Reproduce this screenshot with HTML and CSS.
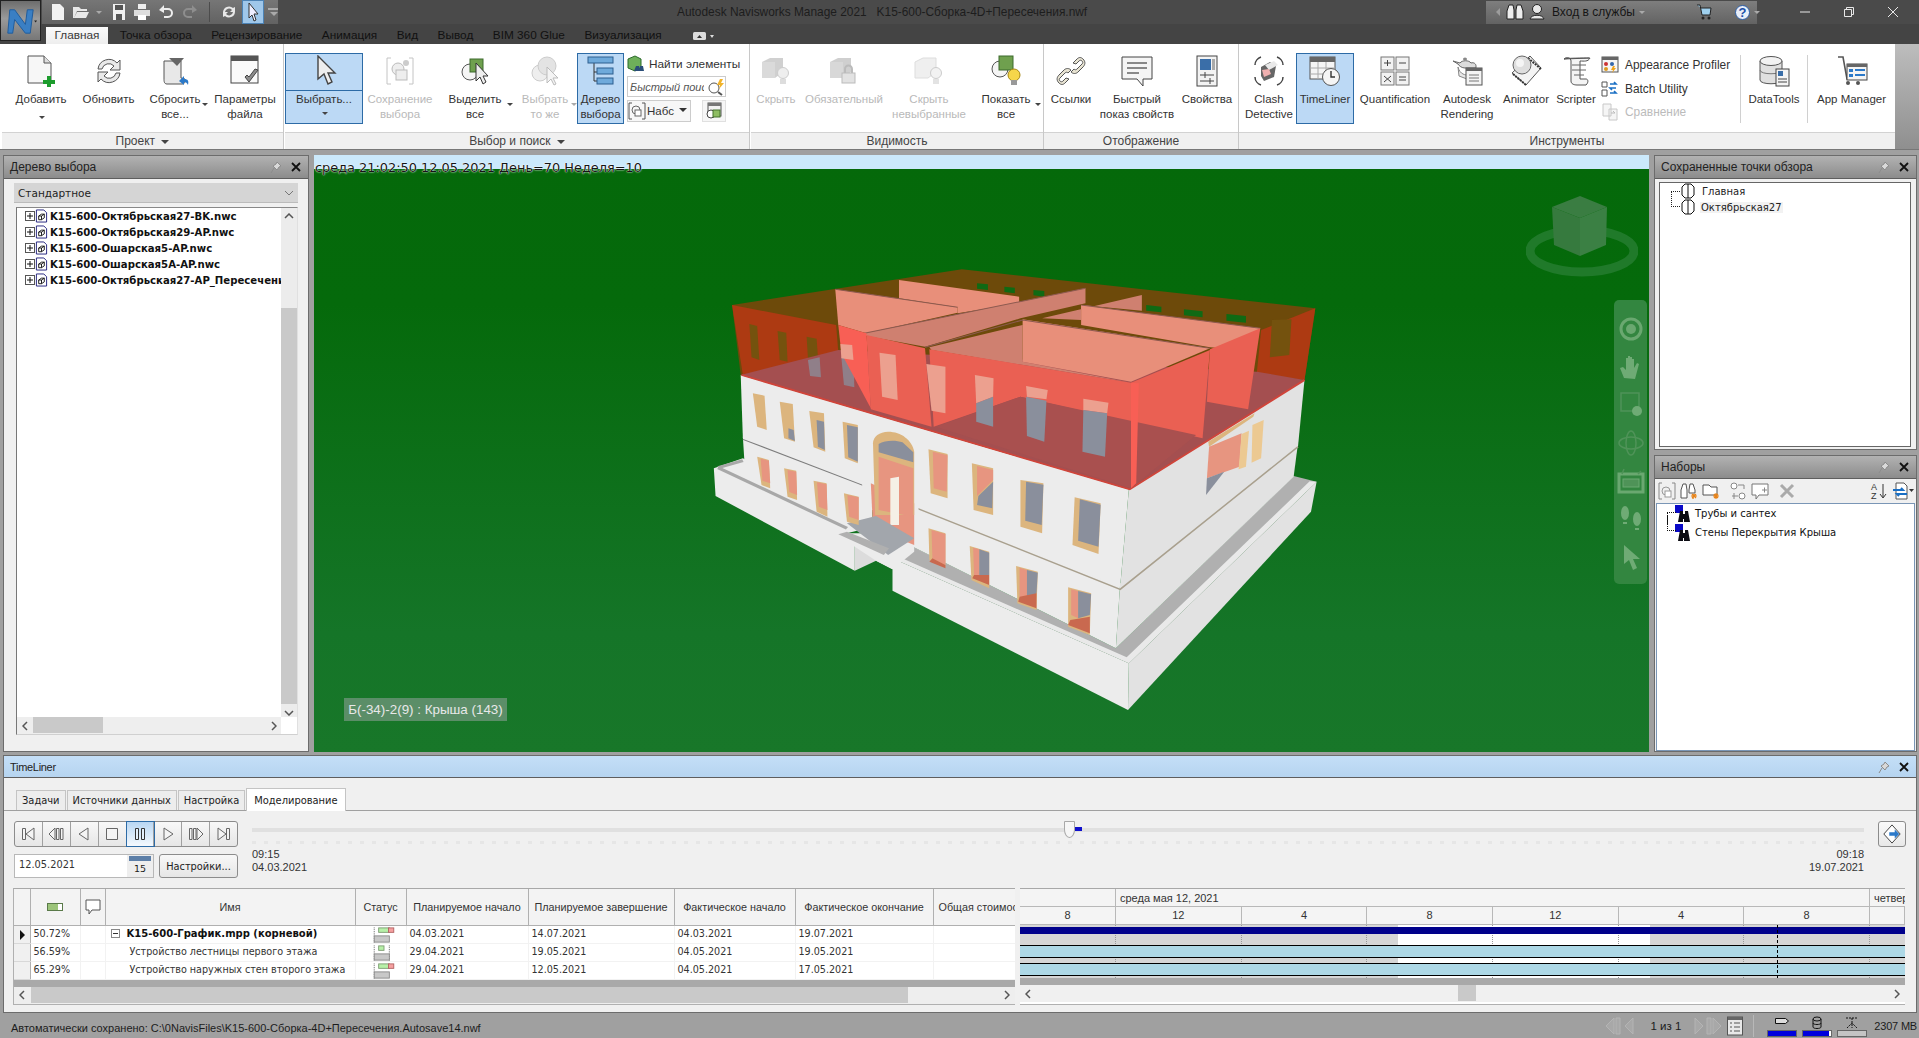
FILE: index.html
```html
<!DOCTYPE html>
<html lang="ru">
<head>
<meta charset="utf-8">
<title>Navisworks Manage 2021</title>
<link rel="stylesheet" href="styles.css">
</head>
<body>
<svg class="defs" width="0" height="0">
  <defs>
    <symbol id="pin" viewBox="0 0 14 14"><path d="M8 2l4 4-2 1-2 3-4-4 3-2zM5 8l-3 5" fill="#d9d9d9" stroke="#8c8c8c"/></symbol>
    <symbol id="x" viewBox="0 0 12 12"><path d="M2 2l8 8M10 2l-8 8" stroke="#111" stroke-width="1.800"/></symbol>
    <symbol id="nwc" viewBox="0 0 14 14"><path d="M1.500 .5h8l3 3v10h-11z" fill="#fff" stroke="#1d1d7a"/><path d="M4 7l3-2h3v4l-3 2H4zM4 7h3v4M7 7l3-2" fill="none" stroke="#111"/></symbol>
    <symbol id="plus" viewBox="0 0 10 10"><rect x=".5" y=".5" width="9" height="9" fill="#fff" stroke="#555"/><path d="M2 5h6M5 2v6" stroke="#111"/></symbol>
    <symbol id="view" viewBox="0 0 16 16"><path d="M5 1h6l3 3v8l-3 3H5l-3-3V4zM8 1v14" fill="#fff" stroke="#111"/></symbol>
    <symbol id="binset" viewBox="0 0 16 18"><rect x="0" y="0" width="8" height="8" fill="#0a0ac8"/><path d="M5 6h3v3h2V6h3l2 11H9v-3H8v3H3z" fill="#0b0b12"/></symbol>
    <symbol id="bar" viewBox="0 0 24 18"><path d="M1 .5v17" stroke="#555" stroke-dasharray="1 1"/><rect x="6" y="1" width="12" height="5" fill="#b7f0a8" stroke="#7a9a70"/><rect x="17" y="1" width="6" height="5" fill="#f5a0a0" stroke="#b06060"/><rect x="1" y="10" width="17" height="7" fill="#c8c8c8" stroke="#888"/></symbol>
    <symbol id="bar2" viewBox="0 0 24 18"><path d="M1 .5v17M18 .5v17" stroke="#555" stroke-dasharray="1 1"/><rect x="6" y="1" width="6" height="5" fill="#b7f0a8" stroke="#7a9a70"/><rect x="1" y="10" width="17" height="7" fill="#c8c8c8" stroke="#888"/></symbol>
  </defs>
</svg>

<header class="chrome">
  <div class="appbtn"><svg viewBox="0 0 40 40" width="40" height="40"><path d="M7 33l2-24h5l11 15 2-15h6l-3 24h-5L14 19l-2 14z" fill="#3a7fc4" stroke="#1f5c9c"/><path d="M34 20l3 0-1.500 2z" fill="#222"/></svg></div>
  <div class="chrome-main">
    <div class="titlebar">
      <div class="qat">
        <svg viewBox="0 0 16 18" width="16" height="18"><path d="M2 1h8l4 4v12H2z" fill="#f2f2f2"/></svg>
        <svg viewBox="0 0 18 18" width="18" height="18"><path d="M1 4h6l2 2h6v2H5L2 15H1zM5 9h12l-3 6H2z" fill="#e8e8e8"/></svg>
        <span class="qat-caret"></span>
        <svg viewBox="0 0 16 18" width="16" height="18"><path d="M2 1h12v16H2z" fill="#efefef"/><rect x="4" y="2" width="8" height="5" fill="#555"/><rect x="5" y="11" width="6" height="6" fill="#555"/></svg>
        <svg viewBox="0 0 18 18" width="18" height="18"><rect x="5" y="1" width="8" height="5" fill="#eee"/><rect x="1" y="7" width="16" height="6" fill="#ddd"/><rect x="5" y="12" width="8" height="5" fill="#fff"/></svg>
        <svg viewBox="0 0 18 18" width="18" height="18"><path d="M2 7l5-5v3h4a5 5 0 0 1 0 10H7v-2h4a3 3 0 0 0 0-6H7v3z" fill="#eee"/></svg>
        <svg viewBox="0 0 18 18" width="18" height="18"><path d="M16 7l-5-5v3H7a5 5 0 0 0 0 10h4v-2H7a3 3 0 0 1 0-6h4v3z" fill="#8e8e8e"/></svg>
        <span class="qat-sep"></span>
        <svg viewBox="0 0 18 18" width="18" height="18"><path d="M3 9a6 6 0 0 1 10-4l2-1v5h-5l2-2a4 4 0 0 0-7 2zM15 9a6 6 0 0 1-10 4l-2 1V9h5l-2 2a4 4 0 0 0 7-2z" fill="#e8e8e8"/></svg>
        <span class="qat-on"><svg viewBox="0 0 14 20" width="14" height="20"><path d="M3 1v15l3-3 2 6 2-1-2-6h4z" fill="#eef" stroke="#333"/></svg></span>
        <span class="qat-more"></span>
      </div>
      <div class="title">Autodesk Navisworks Manage 2021&nbsp;&nbsp;&nbsp;K15-600-Сборка-4D+Пересечения.nwf</div>
      <div class="infocenter">
        <span class="ic-back"></span>
        <svg viewBox="0 0 18 18" width="18" height="18"><path d="M3 2h4l1 5v9H1V8zM11 2h4l2 6v8h-7V7z" fill="#eee" stroke="#222"/></svg>
        <svg viewBox="0 0 18 18" width="18" height="18"><circle cx="9" cy="6" r="4.500" fill="#e8e8e8" stroke="#222"/><path d="M2 16c1-5 13-5 14 0z" fill="#e8e8e8" stroke="#222"/></svg>
        <span class="ic-login">Вход в службы</span><span class="ic-caret"></span>
        <svg class="ic-cart" viewBox="0 0 18 18" width="18" height="18"><path d="M2 2h3l2 10h8l1-7H6" fill="#9fd0ee" stroke="#222"/><circle cx="8" cy="15" r="1.500" fill="#222"/><circle cx="14" cy="15" r="1.500" fill="#222"/></svg>
        <span class="ic-help">?</span><span class="ic-caret"></span>
      </div>
      <div class="winbtns">
        <svg viewBox="0 0 14 14" width="14" height="14"><path d="M2 7h10" stroke="#e8e8e8"/></svg>
        <svg viewBox="0 0 14 14" width="14" height="14"><path d="M2.500 4.500h7v7h-7zM4.500 4.500v-2h7v7h-2" fill="none" stroke="#e8e8e8"/></svg>
        <svg viewBox="0 0 14 14" width="14" height="14"><path d="M2 2l10 10M12 2L2 12" stroke="#e8e8e8"/></svg>
      </div>
    </div>
    <nav class="tabs">
      <span class="tab tab-on">Главная</span>
      <span class="tab">Точка обзора</span>
      <span class="tab">Рецензирование</span>
      <span class="tab">Анимация</span>
      <span class="tab">Вид</span>
      <span class="tab">Вывод</span>
      <span class="tab">BIM 360 Glue</span>
      <span class="tab">Визуализация</span>
      <span class="tab tab-ico"><svg viewBox="0 0 24 10" width="24" height="10"><rect x="1" y="1" width="13" height="8" rx="1.500" fill="#ddd"/><path d="M5 7l2.500-3L10 7z" fill="#333"/><path d="M18 4h4l-2 3z" fill="#ddd"/></svg></span>
    </nav>
  </div>
</header>

<section class="ribbon">
  <div class="rg rg1">
    <div class="rbody cols-project">
      <div class="rb"><svg class="ri" viewBox="0 0 32 32"><path d="M3 1h16l7 7v20H3z" fill="#f7f7f7" stroke="#555"/><path d="M19 1v7h7" fill="#ddd" stroke="#555"/><path d="M22 21h4v4h4v4h-4v3h-4v-3h-4v-4h4z" fill="#1c9c2d"/></svg><span class="rl">Добавить</span><i class="car"></i></div>
      <div class="rb"><svg class="ri" viewBox="0 0 32 32"><path d="M5 14a11 11 0 0 1 19-6l3-3v10H17l4-4a7 7 0 0 0-12 3zM27 18a11 11 0 0 1-19 6l-3 3V17h10l-4 4a7 7 0 0 0 12-3z" fill="#e9e9e9" stroke="#555"/></svg><span class="rl">Обновить</span></div>
      <div class="rb"><svg class="ri" viewBox="0 0 32 32"><path d="M5 6h17v17l4 1c0 3 0 5-3 5H8c-3 0-3-3-3-5z" fill="#e8e8e8" stroke="#555"/><path d="M10 3h15l-7 8z" fill="#666"/><path d="M20 26l5-5v3c4 0 5 2 4 6-1-2-2-3-4-3v3z" fill="#2b79c9"/></svg><span class="rl">Сбросить<br>все...</span><i class="car car-side"></i></div>
      <div class="rb"><svg class="ri" viewBox="0 0 32 32"><rect x="2" y="1" width="27" height="27" fill="#fafafa" stroke="#444"/><rect x="2" y="1" width="27" height="5" fill="#555"/><path d="M16 22l4 5 9-12-3-1-6 8-2-2z" fill="#8c8c8c" stroke="#444"/></svg><span class="rl">Параметры<br>файла</span></div>
    </div>
    <div class="rtitle">Проект <i class="car-in"></i></div>
  </div>
  <div class="rg rg2">
    <div class="rbody cols-select">
      <div class="rb rb-on rb-split"><svg class="ri ri-c" viewBox="0 0 32 32"><path d="M10 1v23l6-5 4 10 4-2-4-9h7z" fill="#eee" stroke="#444" stroke-width="1.400"/></svg><span class="split-line"></span><span class="rl rl-split">Выбрать...</span><i class="car"></i></div>
      <div class="rb rb-off"><svg class="ri" viewBox="0 0 32 32"><path d="M7 3H3v26h4M25 3h4v26h-4" fill="none" stroke="#c4c4c4"/><circle cx="14" cy="14" r="6" fill="#eee" stroke="#bbb"/><rect x="12" y="15" width="11" height="10" fill="#eee" stroke="#bbb"/><circle cx="22" cy="8" r="3" fill="#ccc"/></svg><span class="rl">Сохранение<br>выбора</span></div>
      <div class="rb"><svg class="ri" viewBox="0 0 32 32"><circle cx="11" cy="17" r="8" fill="#f5f5f5" stroke="#555"/><rect x="11" y="4" width="13" height="13" fill="#6fa04e" stroke="#3c6a2c"/><path d="M17 8v18l4-4 3 7 3-2-3-6h5z" fill="#eee" stroke="#333"/></svg><span class="rl">Выделить<br>все</span><i class="car car-side"></i></div>
      <div class="rb rb-off"><svg class="ri" viewBox="0 0 32 32"><circle cx="11" cy="18" r="8" fill="#eee" stroke="#ccc"/><circle cx="18" cy="11" r="9" fill="#e3e3e3" stroke="#ccc"/><path d="M18 12v16l4-4 3 6 2-1-3-6h5z" fill="#f4f4f4" stroke="#bbb"/></svg><span class="rl">Выбрать<br>то же</span><i class="car car-side car-off"></i></div>
      <div class="rb rb-on rb-tree"><svg class="ri" viewBox="0 0 32 32"><path d="M9 8v18h4M9 17h4" fill="none" stroke="#333"/><rect x="3" y="2" width="25" height="6" fill="#6faadb" stroke="#2d5f8f"/><rect x="12" y="13" width="16" height="6" fill="#6faadb" stroke="#2d5f8f"/><rect x="12" y="23" width="16" height="6" fill="#6faadb" stroke="#2d5f8f"/></svg><span class="rl">Дерево<br>выбора</span></div>
      <div class="rcol rcol-find">
        <div class="rrow"><svg class="ris" viewBox="0 0 18 18"><path d="M1 4l7-3 6 3v9l-6 3-7-3z" fill="#6eb05a" stroke="#2b6a2b"/><path d="M9 11h3l1 5H7zM13 11h3l1 5h-5z" fill="#2a4d78"/></svg>Найти элементы</div>
        <div class="quick"><em>Быстрый поиск</em><svg class="ris" viewBox="0 0 18 18"><circle cx="7" cy="10" r="5" fill="#fff" stroke="#555"/><path d="M11 14l4 3" stroke="#555" stroke-width="2"/><path d="M13 1l-3 6h3l-1 4 5-6h-3l2-4z" fill="#f1b32a"/></svg></div>
        <div class="setrow">
          <div class="setcombo"><svg class="ris" viewBox="0 0 18 18"><path d="M4 1H1v16h3M14 1h3v16h-3" fill="none" stroke="#555"/><circle cx="8" cy="8" r="4" fill="none" stroke="#666"/><rect x="7" y="8" width="6" height="6" fill="#fff" stroke="#666"/></svg>Набс<i class="combo-car"></i></div>
          <span class="setbtn"><svg class="ris" viewBox="0 0 18 18"><rect x="3" y="1" width="13" height="13" fill="#f2f2f2" stroke="#555"/><rect x="3" y="1" width="13" height="3" fill="#777"/><circle cx="6" cy="12" r="4" fill="#fff" stroke="#444"/><rect x="8" y="8" width="7" height="7" fill="#8ebd62" stroke="#44722c"/></svg></span>
        </div>
      </div>
    </div>
    <div class="rtitle">Выбор и поиск <i class="car-in"></i></div>
  </div>
  <div class="rg rg3">
    <div class="rbody cols-vis">
      <div class="rb rb-off"><svg class="ri" viewBox="0 0 32 32"><path d="M2 7l8-4h13v14l-8 6H2z" fill="#d0d0d0"/><path d="M2 7h13v16H2z" fill="#dadada"/><circle cx="23" cy="18" r="5.500" fill="#eee" stroke="#ccc"/><rect x="20" y="24" width="6" height="5" fill="#ddd"/></svg><span class="rl">Скрыть</span></div>
      <div class="rb rb-off"><svg class="ri" viewBox="0 0 32 32"><path d="M2 7l8-4h13v14l-8 6H2z" fill="#cfcfcf"/><path d="M2 7h13v16H2z" fill="#d8d8d8"/><rect x="14" y="18" width="13" height="10" fill="#e2e2e2" stroke="#bbb"/><path d="M17 18v-4a3.500 3.500 0 0 1 7 0v4" fill="none" stroke="#bbb" stroke-width="2"/></svg><span class="rl">Обязательный</span></div>
      <div class="rb rb-off"><svg class="ri" viewBox="0 0 32 32"><path d="M2 7l8-4h13v14l-8 6H2z" fill="#efefef" stroke="#ddd"/><circle cx="23" cy="18" r="5.500" fill="#f2f2f2" stroke="#ccc"/><rect x="20" y="24" width="6" height="5" fill="#e3e3e3"/></svg><span class="rl">Скрыть<br>невыбранные</span></div>
      <div class="rb"><svg class="ri" viewBox="0 0 32 32"><circle cx="10" cy="14" r="8" fill="#f5f5f5" stroke="#555"/><rect x="9" y="1" width="14" height="14" fill="#6fa04e" stroke="#3c6a2c"/><circle cx="24" cy="20" r="6" fill="#f6d64a" stroke="#a78814"/><rect x="21" y="25" width="6" height="5" fill="#999"/></svg><span class="rl">Показать<br>все</span><i class="car car-side"></i></div>
    </div>
    <div class="rtitle">Видимость</div>
  </div>
  <div class="rg rg4">
    <div class="rbody cols-disp">
      <div class="rb"><svg class="ri" viewBox="0 0 32 32"><path d="M4 28c-3-3-2-6 0-8l5-5c2-2 5-2 7 0l-3 3c-1-1-2-1-3 0l-5 5c-1 1-1 2 0 3s2 1 3 0l3-3 3 1-4 4c-2 2-4 2-6 0zM28 4c3 3 2 6 0 8l-5 5c-2 2-5 2-7 0l3-3c1 1 2 1 3 0l5-5c1-1 1-2 0-3s-2-1-3 0l-3 3-3-1 4-4c2-2 4-2 6 0z" fill="#e8e4d2" stroke="#555"/></svg><span class="rl">Ссылки</span></div>
      <div class="rb"><svg class="ri" viewBox="0 0 32 32"><path d="M1 2h30v22h-9v7l-6-7H1z" fill="#f5f5f5" stroke="#444"/><path d="M6 8h20M6 13h20M6 18h12" stroke="#666" stroke-width="1.500"/></svg><span class="rl">Быстрый<br>показ свойств</span></div>
      <div class="rb"><svg class="ri" viewBox="0 0 32 32"><rect x="6" y="1" width="20" height="30" fill="#f3f3f3" stroke="#444"/><rect x="9" y="4" width="11" height="11" fill="#3a6ea8"/><rect x="21" y="4" width="3" height="11" fill="#aaa"/><path d="M9 20h14M9 26h14M14 17v6M19 23v6" stroke="#444"/></svg><span class="rl">Свойства</span></div>
    </div>
    <div class="rtitle">Отображение</div>
  </div>
  <div class="rg rg5">
    <div class="rbody cols-tools">
      <div class="rb"><svg class="ri" viewBox="0 0 32 32"><path d="M8 12l9-5 6 4-2 11-10 4-3-5z" fill="#666"/><path d="M12 10l9-4 4 4-9 5z" fill="#e9e9e9"/><path d="M9 15l7-1 2 5-7 3z" fill="#f0b0b0"/><path d="M2 10c0-4 3-7 6-8M30 10c0-4-3-7-6-8M2 22c0 4 3 7 6 8M30 22c0 4-3 7-6 8" fill="none" stroke="#444" stroke-width="1.500"/></svg><span class="rl">Clash<br>Detective</span></div>
      <div class="rb rb-on"><svg class="ri" viewBox="0 0 32 32"><rect x="1" y="2" width="25" height="22" fill="#f5f5f5" stroke="#555"/><rect x="1" y="2" width="25" height="5" fill="#666"/><path d="M1 13h25M1 19h25M9 7v17M17 7v17" stroke="#aaa"/><circle cx="22" cy="22" r="8.500" fill="#f5f5f5" stroke="#555"/><path d="M22 16v6h4" fill="none" stroke="#333" stroke-width="1.400"/></svg><span class="rl">TimeLiner</span></div>
      <div class="rb"><svg class="ri" viewBox="0 0 32 32"><rect x="2" y="2" width="13" height="13" fill="#f2f2f2" stroke="#777"/><rect x="17" y="2" width="13" height="13" fill="#f2f2f2" stroke="#777"/><rect x="2" y="17" width="13" height="13" fill="#f2f2f2" stroke="#777"/><rect x="17" y="17" width="13" height="13" fill="#f2f2f2" stroke="#777"/><path d="M5 8h7M8.500 5v6M20 8h7M5 21l7 6M12 21l-7 6M20 22h7M20 25h7" stroke="#444"/></svg><span class="rl">Quantification</span></div>
      <div class="rb"><svg class="ri" viewBox="0 0 32 32"><path d="M2 6l7 2c2-3 9-3 11 0 3-1 5 1 5 3v2H14c-3 0-6-2-7-4z" fill="#dcdcdc" stroke="#666"/><ellipse cx="14" cy="4" rx="2" ry="1.500" fill="#888"/><path d="M7 12c2 8 8 8 10 8l-1 4-8-3z" fill="#e8e8e8" stroke="#888"/><rect x="15" y="13" width="16" height="17" fill="#f4f4f4" stroke="#555"/><rect x="15" y="13" width="16" height="3" fill="#666"/><path d="M18 20h10M18 23h10M18 26h10" stroke="#777"/></svg><span class="rl">Autodesk<br>Rendering</span></div>
      <div class="rb"><svg class="ri" viewBox="0 0 32 32"><path d="M2 18L20 1l11 12-15 17z" fill="#f4f4f4" stroke="#555"/><path d="M3 19l13 11M18 3l13 11" stroke="#333" stroke-width="2" stroke-dasharray="2 1"/><circle cx="12" cy="10" r="9" fill="#dedede" stroke="#666"/><circle cx="10" cy="8" r="4" fill="#f5f5f5"/></svg><span class="rl">Animator</span></div>
      <div class="rb"><svg class="ri" viewBox="0 0 32 32"><path d="M4 4c3-3 7-1 7 2v20c0 3 3 4 6 4h9c3-3 2-6 0-6H20V6c4 0 8 1 10-3z" fill="#f4f4f4" stroke="#555"/><path d="M4 4c3-1 20-1 25-1" fill="none" stroke="#555"/><path d="M12 10h14M12 15h14M14 20h10" stroke="#666"/></svg><span class="rl">Scripter</span></div>
      <div class="rcol rcol-tools">
        <div class="rrow"><svg class="ris" viewBox="0 0 18 18"><rect x="1" y="1" width="16" height="15" fill="#f5f5f5" stroke="#555"/><rect x="1" y="1" width="16" height="3" fill="#666"/><circle cx="5" cy="8" r="2" fill="#c33"/><circle cx="11" cy="8" r="2" fill="#36a"/><circle cx="5" cy="13" r="2" fill="#dc9a22"/><path d="M12 10l-2 4h2l-1 3 4-5h-2l1-2z" fill="#f1a31a"/></svg>Appearance Profiler</div>
        <div class="rrow"><svg class="ris" viewBox="0 0 18 18"><path d="M1 2h5v5H1zM1 10h5v6H1z" fill="#fff" stroke="#555"/><path d="M9 4h6l-2-2M15 8H9l2 2M9 13h6l-2-2" fill="none" stroke="#1a6fc4" stroke-width="1.600"/></svg>Batch Utility</div>
        <div class="rrow rrow-off"><svg class="ris" viewBox="0 0 18 18"><path d="M2 1h8v12H2zM8 6h8v11H8z" fill="#f5f5f5" stroke="#c8c8c8"/><path d="M10 10h4l-2-2" fill="none" stroke="#bbb"/></svg>Сравнение</div>
      </div>
      <span class="rsep"></span>
      <div class="rb"><svg class="ri" viewBox="0 0 32 32"><path d="M2 6v19c0 5 22 5 22 0V6" fill="#e0e0e0" stroke="#555"/><ellipse cx="13" cy="6" rx="11" ry="4.500" fill="#f2f2f2" stroke="#555"/><path d="M2 15c0 5 22 5 22 0" fill="none" stroke="#777"/><rect x="18" y="14" width="13" height="17" fill="#f4f4f4" stroke="#444"/><rect x="20" y="16" width="5" height="5" fill="#3a6ea8"/><path d="M20 24h9M20 27h9" stroke="#444"/></svg><span class="rl">DataTools</span></div>
      <span class="rsep"></span>
      <div class="rb"><svg class="ri" viewBox="0 0 32 32"><path d="M2 2h5l4 22h12" fill="none" stroke="#555" stroke-width="1.600"/><circle cx="12" cy="28" r="2" fill="#555"/><circle cx="22" cy="28" r="2" fill="#555"/><rect x="11" y="9" width="20" height="16" fill="#f4f4f4" stroke="#444"/><rect x="11" y="9" width="20" height="3" fill="#666"/><rect x="13" y="14" width="4" height="3" fill="#2b79c9"/><rect x="13" y="19" width="4" height="3" fill="#2b79c9"/><path d="M19 15h10M19 20h10" stroke="#2b79c9" stroke-width="2"/></svg><span class="rl">App Manager</span></div>
    </div>
    <div class="rtitle">Инструменты</div>
  </div>
  <div class="rfill"></div>
</section>

<main class="work">
  <section class="panel">
    <div class="ptitle"><span>Дерево выбора</span><span class="pctl"><svg width="14" height="14"><use href="#pin"/></svg><svg width="12" height="12"><use href="#x"/></svg></span></div>
    <div class="combo"><span>Стандартное</span><svg viewBox="0 0 10 6" width="10" height="6"><path d="M1 1l4 4 4-4" fill="none" stroke="#777"/></svg></div>
    <div class="treebox">
      <div class="treearea">
        <div class="tree">
          <div class="trow"><svg class="tplus"><use href="#plus"/></svg><svg class="tfile"><use href="#nwc"/></svg><b>K15-600-Октябрьская27-BK.nwc</b></div>
          <div class="trow"><svg class="tplus"><use href="#plus"/></svg><svg class="tfile"><use href="#nwc"/></svg><b>K15-600-Октябрьская29-AP.nwc</b></div>
          <div class="trow"><svg class="tplus"><use href="#plus"/></svg><svg class="tfile"><use href="#nwc"/></svg><b>K15-600-Ошарская5-AP.nwc</b></div>
          <div class="trow"><svg class="tplus"><use href="#plus"/></svg><svg class="tfile"><use href="#nwc"/></svg><b>K15-600-Ошарская5А-AP.nwc</b></div>
          <div class="trow"><svg class="tplus"><use href="#plus"/></svg><svg class="tfile"><use href="#nwc"/></svg><b>K15-600-Октябрьская27-AP_Пересечения.nwc</b></div>
        </div>
        <div class="vscroll">
          <svg viewBox="0 0 10 6" width="10" height="6"><path d="M1 5l4-4 4 4" fill="none" stroke="#555" stroke-width="1.500"/></svg>
          <span class="vthumb"></span>
          <svg viewBox="0 0 10 6" width="10" height="6"><path d="M1 1l4 4 4-4" fill="none" stroke="#555" stroke-width="1.500"/></svg>
        </div>
      </div>
      <div class="hscroll hscroll-tree">
        <svg viewBox="0 0 6 10" width="6" height="10"><path d="M5 1L1 5l4 4" fill="none" stroke="#555" stroke-width="1.500"/></svg>
        <span class="hthumb"></span>
        <svg viewBox="0 0 6 10" width="6" height="10"><path d="M1 1l4 4-4 4" fill="none" stroke="#555" stroke-width="1.500"/></svg>
      </div>
    </div>
  </section>

  <section class="viewport">
    <div class="vp-strip"></div>
    <div class="vp-clock">среда 21:02:50 12.05.2021 День=70 Неделя=10</div>
    <svg class="building" viewBox="0 0 1568 1440" preserveAspectRatio="none">
      <!-- plinth -->
      <polygon class="w1" points="78,655 145,625 445,830 385,850 403,885 403,962 82,738"/>
      <polyline class="st-l" points="88,653 145,632"/>
      <polyline class="st-l" points="88,653 385,835"/>
      <polygon class="w2" points="403,885 470,900 452,932 403,962"/>
      <polygon class="w1" points="452,932 480,905 540,880 505,925 490,958"/>
      <polygon class="w1" points="490,925 1035,1240 1033,1380 490,1022"/>
      <polygon class="w3" points="1035,1240 1468,695 1455,785 1033,1380"/>
      <polygon class="st" points="515,875 1005,1195 1415,678 1468,695 1035,1240 490,925"/>
      <polygon class="w4" points="495,915 1030,1222 1452,694 1468,695 1035,1240 490,925"/>
      <polygon class="w1" points="365,850 540,850 540,905 490,958 452,932 403,890"/>
      <!-- lower floor -->
      <polygon class="w1" points="145,560 440,705 445,830 150,665"/>
      <polygon class="w1" points="537,755 1015,1000 1005,1195 537,890"/>
      <polygon class="w3" points="1015,1000 1425,580 1415,680 1005,1195"/>
      <!-- upper floor -->
      <polygon class="w1" points="140,375 1035,718 1015,1010 145,565"/>
      <polygon class="w3" points="1035,718 1440,390 1425,590 1015,1010"/>
      <polyline class="ln-g" points="145,568 440,715"/>
      <polyline class="ln-t" points="537,770 1015,1018 1425,590"/>
      <!-- entrance -->
      <path class="w1" d="M420 520h130v260h-130z"/>
      <polygon class="sal" points="440,700 540,760 540,885 445,835"/>
      <path class="tan" d="M445 580c0-20 15-35 35-35 30 0 55 25 60 60v190h-90z"/>
      <path class="sal" d="M458 620l80 35v145l-80-20z"/>
      <path class="gy" d="M458 582c15-12 40-12 55-5l25 30v30l-80-30z"/>
      <path class="wh" d="M485 685l20-5v145h-20z"/>
      <polygon class="st2" points="385,820 452,798 540,865 480,915"/>
      <polygon class="st" points="365,853 385,845 482,895 470,915"/>
      <!-- upper windows -->
      <polygon class="tan" points="168,430 195,437 200,540 178,530"/>
      <polygon class="tan" points="230,455 260,462 265,575 240,565"/>
      <polygon class="gy" points="250,535 262,540 265,573 250,565"/>
      <polygon class="tan" points="298,483 332,490 335,605 308,592"/>
      <polygon class="gy" points="315,510 332,515 334,600 318,590"/>
      <polygon class="tan" points="375,515 410,525 410,640 380,625"/>
      <polygon class="gy" points="385,525 410,532 410,635 388,622"/>
      <polygon class="tan" points="573,598 617,612 617,745 578,730"/>
      <polygon class="sal" points="583,605 617,616 615,725 585,715"/>
      <polygon class="tan" points="673,640 722,655 722,795 677,780"/>
      <polygon class="sal" points="685,648 722,660 722,690 685,738"/>
      <polygon class="gy" points="688,738 722,695 720,775 685,765"/>
      <polygon class="tan" points="785,690 838,700 835,850 785,830"/>
      <polygon class="gy" points="798,695 838,704 834,825 796,812"/>
      <polygon class="tan" points="910,742 970,760 965,912 905,885"/>
      <polygon class="gy" points="922,748 970,764 965,890 918,872"/>
      <!-- lower windows -->
      <polygon class="tan" points="178,620 205,630 208,715 188,705"/>
      <polygon class="sal" points="186,626 205,632 208,700 190,692"/>
      <polygon class="tan" points="240,655 268,662 270,750 248,740"/>
      <polygon class="sal" points="248,660 268,665 270,735 252,726"/>
      <polygon class="tan" points="308,692 338,700 340,800 315,785"/>
      <polygon class="sal" points="316,697 338,703 340,780 320,770"/>
      <polygon class="tan" points="378,730 412,740 412,825 385,815"/>
      <polygon class="sal" points="386,735 412,742 412,810 390,800"/>
      <polygon class="tan" points="573,835 612,850 612,950 575,930"/>
      <polygon class="sal" points="580,840 612,852 612,945 582,925"/>
      <polygon class="dred" points="582,925 612,945 612,955 575,935"/>
      <polygon class="tan" points="668,888 713,905 713,1015 672,990"/>
      <polygon class="sal" points="676,893 690,898 690,985 678,975"/>
      <polygon class="gy" points="690,898 713,908 713,975 690,985"/>
      <polygon class="dred" points="678,975 713,975 713,1005 674,985"/>
      <polygon class="tan" points="775,948 825,965 822,1080 778,1060"/>
      <polygon class="sal" points="783,953 800,960 800,1050 783,1040"/>
      <polygon class="gy" points="800,960 825,968 822,1030 800,1050"/>
      <polygon class="dred" points="783,1040 822,1030 822,1075 780,1055"/>
      <polygon class="tan" points="895,1012 948,1030 945,1155 895,1130"/>
      <polygon class="sal" points="902,1018 918,1023 918,1105 902,1095"/>
      <polygon class="gy" points="918,1023 948,1033 945,1095 918,1105"/>
      <polygon class="dred" points="900,1110 945,1100 945,1150 895,1125"/>
      <!-- right wall opening -->
      <polygon class="tan" points="1218,575 1325,490 1322,500 1220,590"/>
      <polygon class="sal" points="1220,590 1295,550 1290,650 1215,685"/>
      <polygon class="gy" points="1215,685 1255,665 1213,735"/>
      <polygon class="tan2" points="1295,552 1312,542 1305,650 1288,658"/>
      <polygon class="tan2" points="1320,525 1346,510 1340,625 1318,638"/>
      <!-- top translucent storey -->
      <polygon class="olive" points="120,165 650,58 1465,175 1440,390 140,375"/>
      <polygon class="dr" points="120,165 360,225 365,305 145,375"/>
      <polygon class="dr" points="1465,175 1340,240 1330,370 1440,390"/>
      <polygon class="grn" points="685,100 710,103 710,120 685,116"/>
      <polygon class="grn" points="748,110 772,113 772,130 748,126"/>
      <polygon class="grn" points="815,120 840,123 840,140 815,136"/>
      <polygon class="grn" points="1075,165 1110,170 1110,187 1075,182"/>
      <polygon class="grn" points="1162,178 1205,184 1205,202 1162,196"/>
      <polygon class="grn" points="1260,192 1305,198 1305,218 1260,212"/>
      <polygon class="grn2" points="160,222 178,228 183,330 165,322"/>
      <polygon class="grn2" points="225,243 245,248 248,335 230,330"/>
      <polygon class="grn2" points="292,260 315,266 318,320 295,325"/>
      <polygon class="grn2" points="1365,210 1410,208 1405,315 1360,322"/>
      <!-- floor -->
      <polygon class="floor" points="140,375 365,300 1330,365 1440,390 1035,718"/>
      <polygon class="fw" points="295,330 322,322 325,382 300,378"/>
      <polygon class="fw" points="372,320 400,315 402,412 378,405"/>
      <polyline class="ln-r" points="142,375 1037,718 1440,390"/>
      <!-- inner salmon walls -->
      <polygon class="top1" points="505,90 782,140 782,160 640,190 640,172 505,145"/>
      <polygon class="top1" points="358,118 640,172 640,188 430,250 365,225"/>
      <polygon class="top2" points="425,250 935,115 935,160 785,205 565,290 430,258"/>
      <polygon class="top2" points="835,205 1065,135 1065,182 925,165 925,210"/>
      <polygon class="top1" points="925,165 1338,235 1320,302 1222,292 925,225"/>
      <polygon class="top2" points="575,292 790,225 790,335 1040,398 580,300"/>
      <polygon class="top1" points="790,208 1222,295 1040,395 790,335"/>
      <polyline class="ln-d" points="358,118 640,172"/>
      <polyline class="ln-d" points="425,250 935,115"/>
      <polyline class="ln-d" points="565,292 790,210 1222,295"/>
      <polyline class="ln-d" points="925,165 1338,235"/>
      <polygon class="red1" points="365,225 430,250 440,475 372,310"/>
      <polygon class="red2" points="430,255 565,295 580,530 440,478"/>
      <polygon class="red2" points="575,298 1040,398 1040,516 785,440 585,530"/>
      <polygon class="red2" points="1040,398 1222,300 1205,565 1040,516"/>
      <polygon class="red2" points="1222,298 1338,235 1310,478 1215,455"/>
      <polygon class="floor2" points="590,530 785,440 1190,555 1040,715"/>
      <polygon class="red1" points="1040,398 1058,400 1052,700 1040,715"/>
      <polygon class="pale" points="460,308 497,315 502,450 466,440"/>
      <polygon class="pale" points="568,342 612,350 612,490 580,482"/>
      <polygon class="pale" points="680,375 723,385 722,440 683,460"/>
      <polygon class="gw" points="683,460 722,440 722,530 683,515"/>
      <polygon class="pale" points="798,408 848,420 845,448 800,440"/>
      <polygon class="gw" points="798,440 845,452 840,575 800,558"/>
      <polygon class="pale" points="930,446 988,458 985,490 930,480"/>
      <polygon class="gw" points="930,480 985,490 980,620 928,605"/>
      <polygon class="pale" points="370,282 397,285 400,330 372,325"/>
    </svg>

    <svg class="viewcube" viewBox="0 0 112 84">
      <ellipse cx="56" cy="56" rx="52" ry="21" class="vc-ring"/>
      <polygon class="vc-top" points="26,12 54,1 81,12 54,23"/>
      <polygon class="vc-l" points="26,12 54,23 54,61 28,50"/>
      <polygon class="vc-r" points="81,12 54,23 54,61 80,50"/>
    </svg>

    <div class="navbar">
      <svg viewBox="0 0 30 30" width="30" height="30"><circle cx="15" cy="15" r="10" class="nb-s"/><circle cx="15" cy="15" r="5" class="nb-f"/></svg>
      <svg viewBox="0 0 30 30" width="30" height="30"><path d="M8 26L4 16l3-1 3 3V6h2v9-11h2v11-10h2v10-8h2v9l3-5 2 1-4 15z" class="nb-h"/></svg>
      <svg viewBox="0 0 30 30" width="30" height="30"><rect x="5" y="3" width="18" height="18" class="nb-d"/><circle cx="21" cy="21" r="5" class="nb-h"/></svg>
      <svg viewBox="0 0 30 30" width="30" height="30"><ellipse cx="15" cy="15" rx="12" ry="6" class="nb-d"/><ellipse cx="15" cy="15" rx="5" ry="12" class="nb-d"/></svg>
      <svg viewBox="0 0 30 30" width="30" height="30"><rect x="3" y="8" width="24" height="18" class="nb-s"/><rect x="7" y="13" width="16" height="8" class="nb-f2"/><path d="M6 8l2-5M22 8l3-3" class="nb-d"/></svg>
      <svg viewBox="0 0 30 30" width="30" height="30"><ellipse cx="9" cy="9" rx="4" ry="7" class="nb-h"/><ellipse cx="21" cy="15" rx="4" ry="7" class="nb-h"/><rect x="7" y="18" width="4" height="2" class="nb-h"/><rect x="19" y="24" width="4" height="2" class="nb-h"/></svg>
      <svg viewBox="0 0 30 30" width="30" height="30"><path d="M8 3v19l5-4 4 10 4-2-4-9h7z" class="nb-h"/></svg>
    </div>

    <div class="vp-label">Б(-34)-2(9) : Крыша (143)</div>
  </section>

  <div class="rightcol">
    <section class="panel panel-saved">
      <div class="ptitle"><span>Сохраненные точки обзора</span><span class="pctl"><svg width="14" height="14"><use href="#pin"/></svg><svg width="12" height="12"><use href="#x"/></svg></span></div>
      <div class="savedbox">
        <div class="srow"><i class="dots"></i><svg class="sv"><use href="#view"/></svg><span>Главная</span></div>
        <div class="srow"><i class="dots dots-up"></i><svg class="sv"><use href="#view"/></svg><span class="sel">Октябрьская27</span></div>
      </div>
    </section>
    <section class="panel panel-sets">
      <div class="ptitle"><span>Наборы</span><span class="pctl"><svg width="14" height="14"><use href="#pin"/></svg><svg width="12" height="12"><use href="#x"/></svg></span></div>
      <div class="settools">
        <svg viewBox="0 0 18 18" width="18" height="18"><path d="M4 1H1v16h3M14 1h3v16h-3" fill="none" stroke="#888"/><circle cx="8" cy="9" r="4" fill="none" stroke="#999"/><rect x="7" y="9" width="6" height="6" fill="#fff" stroke="#999"/></svg>
        <svg viewBox="0 0 18 18" width="18" height="18"><path d="M3 2h3l1 6v8H1V8zM10 2h3l2 6v3h-6V8z" fill="#fff" stroke="#555"/><path d="M14 12l-1 5M11 14h6M12 12l4 4M16 12l-4 4" stroke="#e8841a" stroke-width="1.200"/></svg>
        <svg viewBox="0 0 18 18" width="18" height="18"><path d="M1 3h6l2 2h6v8H1z" fill="#fff" stroke="#555"/><path d="M14 11v6M11 14h6M12 12l4 4M16 12l-4 4" stroke="#e8841a" stroke-width="1.200"/></svg>
        <svg class="st-gap" viewBox="0 0 18 18" width="18" height="18"><circle cx="5" cy="4" r="3" fill="#fff" stroke="#888"/><circle cx="13" cy="14" r="3" fill="#fff" stroke="#888"/><path d="M9 3h6v4M3 14h6M5 11v6" fill="none" stroke="#888"/></svg>
        <svg viewBox="0 0 18 18" width="18" height="18"><path d="M1 2h16v11H8l-3 4v-4H1z" fill="#fff" stroke="#777"/><path d="M11 8h5M13.500 5.500v5" stroke="#888"/></svg>
        <svg class="st-gap" viewBox="0 0 18 18" width="18" height="18"><path d="M3 3l12 12M15 3L3 15" stroke="#aaa" stroke-width="3"/></svg>
        <span class="st-push"></span>
        <svg viewBox="0 0 18 18" width="18" height="18"><text x="1" y="8" class="az">A</text><text x="1" y="17" class="az">Z</text><path d="M13 2v13M10 12l3 4 3-4" fill="none" stroke="#333"/></svg>
        <svg viewBox="0 0 22 18" width="22" height="18"><path d="M4 1h8l3 3v13H4z" fill="#fff" stroke="#555"/><path d="M1 8h10l-2-2M15 12H5l2 2" fill="none" stroke="#1a6fc4" stroke-width="2"/><path d="M17 7h5l-2.500 3z" fill="#333"/></svg>
      </div>
      <div class="setsbox">
        <div class="srow2"><i class="dots2"></i><svg class="bs"><use href="#binset"/></svg><span>Трубы и сантех</span></div>
        <div class="srow2"><i class="dots2 dots-up2"></i><svg class="bs"><use href="#binset"/></svg><span>Стены Перекрытия Крыша</span></div>
      </div>
    </section>
  </div>
</main>

<section class="timeliner">
  <div class="ptitle ptitle-act"><span class="tl-name">TimeLiner</span><span class="pctl"><svg width="14" height="14"><use href="#pin"/></svg><svg width="12" height="12"><use href="#x"/></svg></span></div>
  <div class="tl-tabs">
    <span class="tl-tab">Задачи</span>
    <span class="tl-tab">Источники данных</span>
    <span class="tl-tab">Настройка</span>
    <span class="tl-tab tl-tab-on">Моделирование</span>
  </div>
  <div class="tl-ctrl">
    <div class="tl-left">
      <div class="transport">
        <span class="tbtn"><svg viewBox="0 0 18 18"><path d="M3.500 3.500h3v11h-3zM15 3v12L7 9z" class="tr"/></svg></span>
        <span class="tbtn"><svg viewBox="0 0 18 18"><path d="M8 3v12L2 9zM9.500 3.500h2.500v11H9.500zM13.500 3.500H16v11h-2.500z" class="tr"/></svg></span>
        <span class="tbtn"><svg viewBox="0 0 18 18"><path d="M13 3v12L4 9z" class="tr"/></svg></span>
        <span class="tbtn"><svg viewBox="0 0 18 18"><path d="M3.500 3.500h11v11h-11z" class="tr"/></svg></span>
        <span class="tbtn tbtn-on"><svg viewBox="0 0 18 18"><path d="M4.500 3.500h3v11h-3zM10.500 3.500h3v11h-3z" class="tr tr-on"/></svg></span>
        <span class="tbtn"><svg viewBox="0 0 18 18"><path d="M5 3v12l9-6z" class="tr"/></svg></span>
        <span class="tbtn"><svg viewBox="0 0 18 18"><path d="M2.500 3.500H5v11H2.500zM6.500 3.500H9v11H6.500zM10 3v12l6-6z" class="tr"/></svg></span>
        <span class="tbtn"><svg viewBox="0 0 18 18"><path d="M3 3v12l8-6zM11.500 3.500h3v11h-3z" class="tr"/></svg></span>
      </div>
      <div class="dateline">
        <div class="dateinput"><span>12.05.2021</span><span class="cal"><i></i>15</span></div>
        <span class="setbtn2">Настройки...</span>
      </div>
    </div>
    <div class="tl-slider">
      <div class="track"><span class="thumb"></span><span class="pos"></span></div>
      <div class="ticks"></div>
      <div class="times"><span>09:15<br>04.03.2021</span><span class="t-right">09:18<br>19.07.2021</span></div>
    </div>
    <span class="exportbtn"><svg viewBox="0 0 22 24" width="22" height="24"><path d="M11 2l9 10-9 10L2 12z" fill="#fff" stroke="#333"/><path d="M8 10h6V7l5 5-5 5v-3H8z" fill="#2b79c9"/></svg></span>
  </div>
  <div class="tl-grid">
    <div class="tl-tablewrap">
      <table class="tl-table">
        <colgroup><col class="c0"><col class="c1"><col class="c2"><col class="c3"><col class="c4"><col class="c5"><col class="c6"><col class="c7"><col class="c8"><col class="c9"></colgroup>
        <thead>
          <tr>
            <th></th>
            <th><svg viewBox="0 0 16 8" width="16" height="8"><rect x=".5" y=".5" width="15" height="7" fill="#9cc47a" stroke="#5a7a4a"/><rect x="11" y="1" width="4" height="6" fill="#fff"/></svg></th>
            <th><svg viewBox="0 0 16 16" width="16" height="16"><path d="M1 1h14v10H7l-3 4v-4H1z" fill="#fff" stroke="#555"/></svg></th>
            <th>Имя</th>
            <th>Статус</th>
            <th>Планируемое начало</th>
            <th>Планируемое завершение</th>
            <th>Фактическое начало</th>
            <th>Фактическое окончание</th>
            <th class="clip">Общая стоимость</th>
          </tr>
        </thead>
        <tbody>
          <tr>
            <td class="grip"><i></i></td><td>50.72%</td><td></td>
            <td class="name-root"><svg class="minus" viewBox="0 0 9 9" width="9" height="9"><rect x=".5" y=".5" width="8" height="8" fill="#fff" stroke="#888"/><path d="M2 4.500h5" stroke="#333"/></svg><b>K15-600-График.mpp (корневой)</b></td>
            <td class="stat"><svg width="24" height="16"><use href="#bar"/></svg></td><td>04.03.2021</td><td>14.07.2021</td><td>04.03.2021</td><td>19.07.2021</td><td></td>
          </tr>
          <tr>
            <td class="grip"></td><td>56.59%</td><td></td>
            <td class="name-sub">Устройство лестницы первого этажа</td>
            <td class="stat"><svg width="24" height="16"><use href="#bar2"/></svg></td><td>29.04.2021</td><td>19.05.2021</td><td>04.05.2021</td><td>19.05.2021</td><td></td>
          </tr>
          <tr>
            <td class="grip"></td><td>65.29%</td><td></td>
            <td class="name-sub">Устройство наружных стен второго этажа</td>
            <td class="stat"><svg width="24" height="16"><use href="#bar"/></svg></td><td>29.04.2021</td><td>12.05.2021</td><td>04.05.2021</td><td>17.05.2021</td><td></td>
          </tr>
        </tbody>
      </table>
      <div class="strip"></div>
      <div class="hscroll hscroll-table">
        <svg viewBox="0 0 6 10" width="6" height="10"><path d="M5 1L1 5l4 4" fill="none" stroke="#555" stroke-width="1.500"/></svg>
        <span class="hthumb2"></span>
        <svg viewBox="0 0 6 10" width="6" height="10"><path d="M1 1l4 4-4 4" fill="none" stroke="#555" stroke-width="1.500"/></svg>
      </div>
    </div>
    <div class="tl-gantt">
      <div class="gh1"><span></span><span class="gdate">среда мая 12, 2021</span><span class="gclip">четверг</span></div>
      <div class="gh2"><span>8</span><span>12</span><span>4</span><span>8</span><span>12</span><span>4</span><span>8</span><span></span></div>
      <div class="gbody">
        <div class="gticks"><span></span><span></span><span></span><span></span><span></span><span></span><span></span><span></span></div>
        <div class="grow"><span class="gbar-root"></span></div>
        <div class="grow"><span class="gbar"></span></div>
        <div class="grow"><span class="gbar"></span></div>
        <span class="gnow"></span>
      </div>
      <div class="strip"></div>
      <div class="hscroll hscroll-gantt">
        <svg viewBox="0 0 6 10" width="6" height="10"><path d="M5 1L1 5l4 4" fill="none" stroke="#555" stroke-width="1.500"/></svg>
        <span class="hthumb3"></span>
        <svg viewBox="0 0 6 10" width="6" height="10"><path d="M1 1l4 4-4 4" fill="none" stroke="#555" stroke-width="1.500"/></svg>
      </div>
    </div>
  </div>
</section>

<footer class="status">
  <span class="st-text">Автоматически сохранено: C:\0NavisFiles\K15-600-Сборка-4D+Пересечения.Autosave14.nwf</span>
  <div class="st-right">
    <svg viewBox="0 0 34 20" width="34" height="20"><path d="M9 2v16L1 10zM11 2h4v16h-4zM28 2v16l-8-8z" fill="#a8a8a8" stroke="#b4b4b4"/></svg>
    <span class="st-page">1 из 1</span>
    <svg viewBox="0 0 30 20" width="30" height="20"><path d="M2 2v16l8-8zM14 2h4v16h-4zM20 2v16l8-8z" fill="#a8a8a8" stroke="#b4b4b4"/></svg>
    <svg viewBox="0 0 16 20" width="16" height="20"><rect x=".5" y="1" width="15" height="18" fill="#e8e8e8" stroke="#555"/><rect x="1" y="1" width="14" height="3" fill="#666"/><path d="M3 7h2M7 7h6M3 11h2M7 11h6M3 15h2M7 15h6" stroke="#555"/></svg>
    <span class="st-vsep"></span>
    <div class="meter"><svg viewBox="0 0 16 10" width="16" height="10"><path d="M1.500 2.500h10l3 2.500-3 2.500h-10z" fill="#ddd" stroke="#111"/></svg><span class="mbar"></span></div>
    <div class="meter"><svg viewBox="0 0 12 14" width="12" height="14"><ellipse cx="6" cy="3" rx="4" ry="2" fill="none" stroke="#111"/><path d="M2 3v8c0 2 8 2 8 0V3M2 7c0 2 8 2 8 0" fill="none" stroke="#111"/></svg><span class="mbar mbar-2"></span></div>
    <div class="meter"><svg viewBox="0 0 16 14" width="16" height="14"><path d="M2 2h12M8 2v10M3 12l5-5 5 5" fill="none" stroke="#111" stroke-dasharray="2 1"/></svg><span class="mbar mbar-3"></span></div>
    <span class="st-mem">2307 MB</span>
  </div>
</footer>
</body>
</html>
```
FILE: styles.css
```css
* { box-sizing: border-box; }
html, body { margin: 0; padding: 0; }
body {
  width: 1919px; height: 1038px; overflow: hidden; background: #a0a0a0;
  font-family: "Liberation Sans", Arial, sans-serif; font-size: 12px; color: #222;
  display: flex; flex-direction: column;
}
.defs { position: absolute; }
svg { display: block; flex: none; }

/* title + tabs */
.chrome { height: 44px; display: flex; background: #444; position: relative; flex: none; }
.appbtn {
  width: 41px; height: 41px; background: linear-gradient(#6d6d6d, #9a9a9a 45%, #777);
  border: 1px solid #222; position: absolute; left: 0; top: 0; z-index: 2;
}
.appbtn svg { width: 39px; height: 39px; }
.chrome-main { flex: 1; display: flex; flex-direction: column; }
.titlebar { height: 24px; background: #4a4a4a; display: flex; align-items: center; position: relative; }
.qat {
  margin-left: 42px; width: 236px; height: 24px; flex: none; background: linear-gradient(#767676, #626262);
  display: flex; align-items: center; padding-left: 8px; gap: 6px;
}
.qat-caret { width: 0; height: 0; border: 3px solid transparent; border-top-color: #aaa; margin: 3px 3px 0 0; }
.qat-sep { width: 1px; height: 20px; background: #4c4c4c; margin: 0 4px; }
.qat-on { width: 23px; height: 24px; background: #9fc7ea; border: 1px solid #4d83b5; display: flex; align-items: center; justify-content: center; margin-left: -2px; }
.qat-more { width: 11px; height: 9px; border-top: 2px solid #aaa; position: relative; margin-left: -2px; }
.qat-more::after { content: ""; position: absolute; left: 2px; top: 2px; border: 4px solid transparent; border-top-color: #aaa; }
.title { margin-left: 399px; width: 415px; flex: none; color: #1d1d1d; font-size: 11.900px; white-space: nowrap; }
.infocenter {
  margin-left: 394px; width: 271px; height: 23px; flex: none; background: linear-gradient(#7e7e7e, #636363);
  display: flex; align-items: center; padding-left: 6px; gap: 4px;
}
.ic-back { width: 0; height: 0; border: 4px solid transparent; border-right-color: #9c9c9c; margin-right: 2px; flex: none; }
.ic-login { margin-left: 2px; color: #151515; font-size: 12px; white-space: nowrap; flex: none; }
.ic-caret { width: 0; height: 0; border: 3px solid transparent; border-top-color: #aaa; margin-top: 3px; flex: none; }
.ic-cart { margin-left: 46px; margin-right: 18px; }
.ic-help {
  width: 15px; height: 15px; border-radius: 50%; background: #e8eef8; color: #1b4fa8; font-weight: bold; flex: none;
  font-size: 13px; line-height: 13px; text-align: center; border: 1px solid #2c5da5;
}
.winbtns { margin-left: 41px; width: 105px; display: flex; gap: 30px; flex: none; }
.tabs { height: 20px; display: flex; padding-left: 36px; align-items: flex-end; }
.tab { height: 17px; line-height: 16px; padding: 0 9.750px; color: #111; font-size: 11.800px; white-space: nowrap; }
.tab-on {
  width: 62px; height: 17px; padding: 0; margin: 0 2px 0 10px; text-align: center; color: #3a3a3a;
  background: linear-gradient(#fafafa, #eee);
}
.tab-ico { padding-left: 21px; display: flex; align-items: center; }

/* ribbon */
.ribbon { height: 106px; display: flex; background: #fff; flex: none; border-bottom: 1px solid #777; }
.rg { display: flex; flex-direction: column; border-right: 1px solid #c8c8c8; }
.rg1 { width: 284px; padding-left: 2px; }
.rg2 { width: 466px; padding-left: 1px; }
.rg3 { width: 294px; padding-left: 1px; }
.rg4 { width: 195px; }
.rg5 { width: 656px; border-right: 0; }
.rfill { flex: 1; background: linear-gradient(#bdbdbd, #8f8f8f); }
.rbody { height: 88px; display: grid; padding-top: 9px; grid-template-rows: 71px; }
.cols-project { grid-template-columns: 68px 67px 66px 74px; padding-left: 5px; }
.cols-select { grid-template-columns: 78px 74px 76px 64px 47px 122px; }
.cols-vis { grid-template-columns: 50px 86px 84px 70px; }
.cols-disp { grid-template-columns: 54px 78px 62px; }
.cols-tools { grid-template-columns: 54px 58px 82px 62px 56px 44px 142px 1px 66px 1px 87px; padding-left: 3px; }
.rb { position: relative; display: flex; flex-direction: column; align-items: center; padding-top: 2px; text-align: center; color: #333; font-size: 11.500px; line-height: 15px; white-space: nowrap; }
.ri { width: 32px; height: 32px; margin-bottom: 5px; }
.rl { display: block; }
.rb-off { color: #b9b9b9; }
.rb-on { background: #bcd9f5; border: 1px solid #2d6ba6; padding-top: 1px; }
.rb-tree { font-size: 11.500px; }
.rb-split .split-line { position: absolute; left: 0; right: 0; top: 36px; height: 1px; background: #2d6ba6; }
.car { position: absolute; left: 50%; bottom: 16px; margin-left: -2px; width: 0; height: 0; border: 3px solid transparent; border-top-color: #444; }
.rb-split .car { bottom: 5px; }
.rg1 .rb:first-child .car { bottom: 2px; }
.car-side { left: auto; right: 0; bottom: 15px; margin-left: 0; }
.car-off { border-top-color: #aaa; }
.rtitle { height: 17px; line-height: 17px; background: #f0f0f0; border-top: 1px solid #d2d2d2; text-align: center; color: #444; font-size: 12px; }
.car-in { display: inline-block; width: 0; height: 0; border: 4px solid transparent; border-top-color: #444; margin-left: 3px; vertical-align: -3px; }
.rcol { display: flex; flex-direction: column; padding-left: 3px; color: #333; font-size: 11.900px; }
.rrow { height: 24px; display: flex; align-items: center; gap: 3px; white-space: nowrap; }
.rrow-off { color: #bbb; }
.ris { width: 18px; height: 18px; }
.rcol-tools .rrow { gap: 6px; }
.rcol-find { padding-left: 3px; }
.rcol-find .rrow { height: 20px; margin-top: 1px; font-size: 11.800px; gap: 4px; }
.quick { width: 99px; height: 21px; border: 1px solid #ccc; display: flex; align-items: center; justify-content: space-between; margin-top: 2px; font-size: 11px; color: #555; overflow: hidden; }
.quick em { white-space: nowrap; width: 76px; overflow: hidden; padding-left: 2px; }
.setrow { display: flex; margin-top: 3px; gap: 11px; height: 22px; }
.setcombo { width: 64px; border: 1px solid #ccc; display: flex; align-items: center; font-size: 11.500px; position: relative; gap: 1px; background: #f7f7f7; }
.combo-car { position: absolute; right: 3px; top: 7px; border: 4px solid transparent; border-top-color: #333; }
.setbtn { width: 24px; border: 1px solid #e0e0e0; background: #f6f6f6; display: flex; align-items: center; justify-content: center; }
.rsep { background: #d0d0d0; height: 68px; margin-top: 2px; }

/* main */
.work { height: 605px; flex: none; display: grid; grid-template-columns: 306px 1335px 263px; grid-template-rows: 597px; column-gap: 5px; padding: 5px 2px 3px 3px; }
.panel { background: #f0f0f0; border: 1px solid #6c6c6c; display: flex; flex-direction: column; min-height: 0; }
.ptitle {
  height: 23px; flex: none; padding: 0 6px 0 6px; display: flex; align-items: center; justify-content: space-between;
  background: linear-gradient(#b2b2b2, #8c8c8c); border-bottom: 1px solid #5e5e5e; color: #222; font-size: 12px;
}
.ptitle-act { background: linear-gradient(#c4dff7, #b6d4f0); }
.tl-name { font-size: 11px; letter-spacing: -.3px; }
.pctl { display: flex; align-items: center; gap: 7px; }
.combo { margin: 4px 10px 0 10px; height: 20px; flex: none; background: #d5d5d5; border-bottom: 1px solid #bbb; display: flex; align-items: center; justify-content: space-between; padding: 0 4px; color: #222; font-family: "DejaVu Sans", sans-serif; font-size: 10.500px; }
.treebox { margin: 4px 10px 0 12px; height: 528px; flex: none; background: #fff; border-left: 1px solid #777; border-top: 1px solid #888; border-bottom: 1px solid #d0d0d0; border-right: 1px solid #e0e0e0; display: flex; flex-direction: column; }
.treearea { flex: 1; display: flex; min-height: 0; }
.tree { flex: 1; padding-top: 0; overflow: hidden; }
.trow { height: 16px; display: flex; align-items: center; padding-left: 8px; white-space: nowrap; font-family: "DejaVu Sans", sans-serif; font-size: 10.150px; color: #111; }
.trow b { margin-left: 2px; }
.tplus { width: 10px; height: 10px; }
.tfile { width: 13px; height: 14px; margin-left: 0; }
.vscroll { width: 16px; background: #ececec; display: flex; flex-direction: column; align-items: center; padding-top: 0; }
.vscroll svg:first-child { margin-top: 5px; }
.vthumb { width: 16px; background: #c9c9c9; margin-top: 89px; height: 396px; }
.vscroll svg:last-child { margin-top: 6px; }
.hscroll { height: 17px; flex: none; background: #eeeeee; display: flex; align-items: center; position: relative; }
.hscroll svg:first-child { margin-left: 5px; }
.hscroll svg:last-child { margin-left: auto; margin-right: 5px; }
.hscroll-tree { margin-right: 16px; }
.hthumb { position: absolute; left: 16px; top: 0; width: 70px; height: 16px; background: #c9c9c9; }
.hscroll-tree svg:last-child { margin-right: 4px; }

/* viewport */
.viewport { position: relative; overflow: hidden; background: linear-gradient(#05690a, #056a0b 25%, #157528 80%, #187729); }
.vp-strip { height: 14px; background: #cbe9fb; }
.vp-clock { position: absolute; left: 1px; top: 5px; color: #151515; text-shadow: 0 0 2px #fff, 0 0 1px #fff; font-family: "DejaVu Sans", sans-serif; font-size: 12.900px; white-space: nowrap; }
.building { position: absolute; left: 366px; top: 95px; width: 680px; height: 480px; }
.w1 { fill: #ececec; } .w2 { fill: #dcdcdc; } .w3 { fill: #e2e2e2; } .w4 { fill: #e9e9e9; }
.wh { fill: #f5f0e6; }
.st { fill: #b0b0b0; } .st2 { fill: #a2a6ac; }
.st-l { fill: none; stroke: #a8a8a8; stroke-width: 9; }
.ln-g { fill: none; stroke: #7c7c7c; stroke-width: 3; }
.ln-t { fill: none; stroke: #a9a08e; stroke-width: 4; }
.ln-d { fill: none; stroke: #8d5a50; stroke-width: 3; }
.ln-r { fill: none; stroke: #d0443a; stroke-width: 5; }
.tan { fill: #dcb57e; } .tan2 { fill: #ecc992; }
.sal { fill: #e79580; } .gy { fill: #8a8f9c; } .dred { fill: #c9694f; }
.olive { fill: #6d4a0a; } .dr { fill: #ad3a12; }
.grn { fill: #0f6a14; } .grn2 { fill: #74520e; }
.floor { fill: #a44f50; } .floor2 { fill: #a9504f; }
.fw { fill: #8a8f9c; opacity: .75; }
.top1 { fill: #e88f7a; } .top2 { fill: #cf8070; }
.red1 { fill: #f85f55; } .red2 { fill: #ea6053; }
.pale { fill: #eca08f; } .gw { fill: #8a8f9c; }
.viewcube { position: absolute; left: 1212px; top: 40px; width: 112px; height: 84px; }
.vc-ring { fill: none; stroke: #207a2a; stroke-width: 9; }
.vc-top { fill: #3a7d42; } .vc-l { fill: #367a3e; } .vc-r { fill: #3b8044; }
.navbar {
  position: absolute; right: 2px; top: 145px; width: 33px; height: 284px; background: #338640; border-radius: 5px;
  display: flex; flex-direction: column; align-items: center; padding-top: 14px; gap: 8px;
}
.nb-s { fill: none; stroke: #6aa870; stroke-width: 3; }
.nb-f { fill: #6aa870; }
.nb-f2 { fill: #4f9358; stroke: #6aa870; }
.nb-h { fill: #6fab75; }
.nb-d { fill: none; stroke: #4f9358; stroke-width: 1.500; }
.vp-label { position: absolute; left: 30px; top: 543px; width: 163px; height: 23px; line-height: 23px; text-align: center; background: #5b8e68; color: #e8e8e8; font-size: 13.400px; white-space: nowrap; }

/* right col */
.rightcol { display: flex; flex-direction: column; gap: 5px; min-height: 0; }
.panel-saved { height: 295px; flex: none; padding-bottom: 3px; }
.panel-sets { flex: 1; min-height: 0; }
.savedbox { margin: 3px 5px 0 4px; height: 265px; background: #fff; border: 1px solid #666; flex: none; }
.srow { height: 16px; display: flex; align-items: center; position: relative; padding-left: 20px; font-family: "DejaVu Sans", sans-serif; font-size: 10px; color: #222; }
.srow span { margin-left: 5px; padding: 0 1px; }
.srow .sel { background: #f2f2f2; margin-left: 4px; }
.sv { width: 16px; height: 16px; position: relative; }
.dots { position: absolute; left: 11px; top: 8px; width: 9px; height: 8px; border-top: 1px dotted #222; border-left: 1px dotted #222; }
.dots-up { top: -8px; height: 16px; border-top: 0; border-bottom: 1px dotted #222; }
.settools { height: 24px; flex: none; display: flex; align-items: center; padding: 0 2px 0 3px; gap: 4px; background: #f0f0f0; }
.st-gap { margin-left: 5px; }
.st-push { flex: 1; }
.az { font-family: "Liberation Sans", sans-serif; font-size: 9px; fill: #333; }
.setsbox { flex: 1; background: #fff; border: 1px solid #7a96b6; padding-top: 0; margin: 0 1px 0 1px; }
.srow2 { height: 19px; display: flex; align-items: center; padding-left: 18px; position: relative; font-family: "DejaVu Sans", sans-serif; font-size: 10px; color: #111; }
.srow2 span { margin-left: 4px; }
.bs { width: 16px; height: 18px; }
.dots2 { position: absolute; left: 10px; top: 8px; width: 9px; height: 12px; border-top: 1px dotted #111; border-left: 1px dotted #111; }
.dots-up2 { top: -8px; height: 16px; border-top: 0; border-bottom: 1px dotted #111; }

/* timeliner */
.timeliner { height: 258px; flex: none; margin: 0 2px 0 3px; background: #f0f0f0; border: 1px solid #6c6c6c; display: flex; flex-direction: column; }
.timeliner .ptitle { height: 22px; }
.tl-tabs { height: 33px; flex: none; display: flex; align-items: flex-end; padding-left: 12px; border-bottom: 1px solid #a0a0a0; }
.tl-tab { height: 20px; line-height: 20px; padding: 0 5px; background: #ededed; border: 1px solid #c4c4c4; border-bottom: 0; margin-right: 1px; font-family: "DejaVu Sans", sans-serif; font-size: 9.900px; color: #222; white-space: nowrap; }
.tl-tab-on { height: 23px; line-height: 24px; background: #fff; padding: 0 7px; margin-bottom: -1px; margin-right: 0; }
.tl-ctrl { height: 77px; flex: none; display: flex; padding: 10px 10px 0 10px; }
.tl-left { width: 224px; flex: none; }
.transport { display: flex; height: 26px; border: 1px solid #8c8c8c; border-radius: 3px; background: linear-gradient(#f8f8f8, #e6e6e6); width: 224px; }
.tbtn { flex: 1; border-right: 1px solid #a0a0a0; display: flex; align-items: center; justify-content: center; }
.tbtn:last-child { border-right: 0; }
.tbtn svg { width: 18px; height: 18px; }
.tbtn-on { background: linear-gradient(#b9d7f3, #f4f9fe); outline: 1px solid #2d6ba6; position: relative; }
.tr { fill: #f4f4f4; stroke: #666; }
.tr-on { stroke: #333; fill: #e4f0fb; }
.dateline { display: flex; margin-top: 7px; gap: 5px; }
.dateinput { width: 140px; height: 24px; border: 1px solid #b8b8b8; background: #fff; display: flex; justify-content: space-between; align-items: center; padding: 0 0 3px 4px; font-family: "DejaVu Sans", sans-serif; font-size: 9.800px; color: #333; }
.cal { width: 26px; height: 22px; background: #eee; font-size: 9.500px; position: relative; text-align: center; padding: 8px 0 0 0; line-height: 12px; color: #222; margin-bottom: -3px; }
.cal i { position: absolute; left: 2px; right: 2px; top: 1px; height: 5px; background: #5d7fa8; }
.setbtn2 { width: 79px; height: 24px; line-height: 24px; text-align: center; border: 1px solid #8c8c8c; border-radius: 3px; background: linear-gradient(#f8f8f8, #e6e6e6); font-family: "DejaVu Sans", sans-serif; font-size: 9.800px; color: #222; }
.tl-slider { flex: 1; margin-left: 14px; width: 1611px; position: relative; }
.track { position: relative; height: 4px; margin-top: 7px; background: #e0e0e0; }
.thumb { position: absolute; left: 812px; top: -7px; width: 11px; height: 17px; background: #f6f6f6; border: 1px solid #a8a8a8; border-radius: 1px 1px 50% 50%; }
.pos { position: absolute; left: 823px; top: -1px; width: 7px; height: 4px; background: #1010cc; }
.ticks { height: 3px; margin-top: 9px; background: repeating-linear-gradient(90deg, #e6e6e6 0 4px, transparent 4px 12px); }
.times { display: flex; justify-content: space-between; margin-top: 4px; color: #333; font-family: "Liberation Sans", sans-serif; font-size: 11px; line-height: 13px; }
.t-right { text-align: right; }
.exportbtn { width: 28px; height: 26px; margin-left: 14px; border: 1px solid #8c8c8c; border-radius: 3px; background: linear-gradient(#fafafa, #e8e8e8); display: flex; align-items: center; justify-content: center; }
.exportbtn svg { width: 20px; height: 22px; }
.tl-grid { display: flex; padding-left: 10px; gap: 5px; flex: none; }
.tl-tablewrap { width: 1002px; flex: none; background: #fff; overflow: hidden; border-top: 1px solid #a8a8a8; border-bottom: 1px solid #b0b0b0; border-left: 1px solid #b0b0b0; margin-left: -1px; }
.tl-table { table-layout: fixed; width: 1001px; border-collapse: collapse; font-family: "Liberation Sans", sans-serif; font-size: 10.800px; color: #333; }
.c0 { width: 16px; } .c1 { width: 50px; } .c2 { width: 25px; } .c3 { width: 250px; } .c4 { width: 51px; }
.c5 { width: 122px; } .c6 { width: 146px; } .c7 { width: 121px; } .c8 { width: 138px; } .c9 { width: 82px; }
.tl-table th { height: 36px; background: #f3f3f3; border-right: 1px solid #b0b0b0; border-bottom: 1px solid #b0b0b0; font-weight: normal; padding: 0 2px; white-space: nowrap; overflow: hidden; text-align: center; }
.tl-table th svg { margin: 0 auto; }
.tl-table th:last-child { border-right: 0; text-align: left; padding-left: 5px; }
.tl-table td { height: 18px; padding: 0 0 1px 3px; border-right: 1px solid #f2f2f2; white-space: nowrap; border-bottom: 1px solid #f2f2f2; font-family: "DejaVu Sans", sans-serif; font-size: 9.600px; }
.tl-table td.grip { background: #f0f0f0; border-right: 1px solid #b0b0b0; border-bottom: 1px solid #d8d8d8; position: relative; padding: 0; }
.grip i { position: absolute; left: 6px; top: 4px; border: 5px solid transparent; border-left-color: #111; border-right: 0; }
.tl-table td.name-root { padding-left: 5px; font-size: 10px; color: #111; }
.name-root .minus { display: inline-block; vertical-align: -1px; margin-right: 7px; }
.tl-table td.name-sub { padding-left: 24px; }
.tl-table td.stat { padding: 1px 0 0 16px; }
.strip { height: 7px; background: #a9a9a9; }
.hscroll-table { height: 17px; }
.hthumb2 { position: absolute; left: 17px; top: 0; width: 877px; height: 16px; background: #c9c9c9; }
.tl-gantt { width: 885px; flex: none; background: #fff; border-top: 1px solid #a8a8a8; border-bottom: 1px solid #b0b0b0; }
.gh1 { height: 18px; display: grid; grid-template-columns: 96px 754px 35px; background: #f4f4f4; border-bottom: 1px solid #b8b8b8; font-size: 11px; color: #333; line-height: 18px; }
.gh1 span { border-right: 1px solid #b8b8b8; overflow: hidden; white-space: nowrap; padding-left: 4px; }
.gh1 span:last-child { border-right: 0; }
.gh2 { height: 18px; display: grid; grid-template-columns: 96px repeat(6, 1fr) 35px; background: #f4f4f4; border-bottom: 1px solid #b8b8b8; font-size: 11px; line-height: 17px; text-align: center; color: #333; }
.gh2 span { border-right: 1px solid #b8b8b8; }
.gbody {
  height: 53px; position: relative;
  background: linear-gradient(90deg, #d6d6d6 0 378px, #fff 378px 630px, #d6d6d6 630px);
}
.gticks { position: absolute; inset: 0; display: grid; grid-template-columns: 96px repeat(6, 1fr) 35px; }
.gticks span { border-right: 1px dotted #999; }
.gticks span:last-child { border-right: 0; }
.grow { height: 18px; padding-top: 2px; position: relative; }
.gbar-root { display: block; height: 7px; background: #00008b; }
.gbar { display: block; height: 13px; background: #add8e6; border-top: 1px solid #000; border-bottom: 1px solid #000; }
.gnow { position: absolute; left: 757px; top: 0; bottom: 0; border-left: 1px dashed #000; }
.hscroll-gantt { height: 17px; background: #f0f0f0; }
.hthumb3 { position: absolute; left: 438px; top: 0; width: 18px; height: 16px; background: #c9c9c9; }

/* status */
.status { height: 25px; flex: none; display: flex; align-items: center; background: #a0a0a0; padding: 4px 2px 0 11px; color: #1c1c1c; }
.st-text { font-size: 11px; white-space: nowrap; }
.st-right { margin-left: auto; display: flex; align-items: center; margin-top: -4px; }
.st-page { margin: 0 12px 0 11px; font-size: 11.500px; }
.st-right > svg:nth-of-type(2) { margin-right: 4px; }
.st-vsep { width: 1px; height: 22px; background: #b8b8b8; margin: 0 13px 0 10px; }
.meter { width: 30px; margin-right: 5px; display: flex; flex-direction: column; align-items: center; height: 22px; justify-content: space-between; }
.meter svg { margin-top: 1px; }
.mbar { display: block; width: 30px; height: 7px; background: #0000dd; border: 1px solid #666; }
.mbar-2 { box-shadow: inset -2px 0 0 #fff; }
.mbar-3 { background: #c4c4c4; }
.st-mem { font-size: 11px; margin-left: 2px; letter-spacing: -.2px; }
```
